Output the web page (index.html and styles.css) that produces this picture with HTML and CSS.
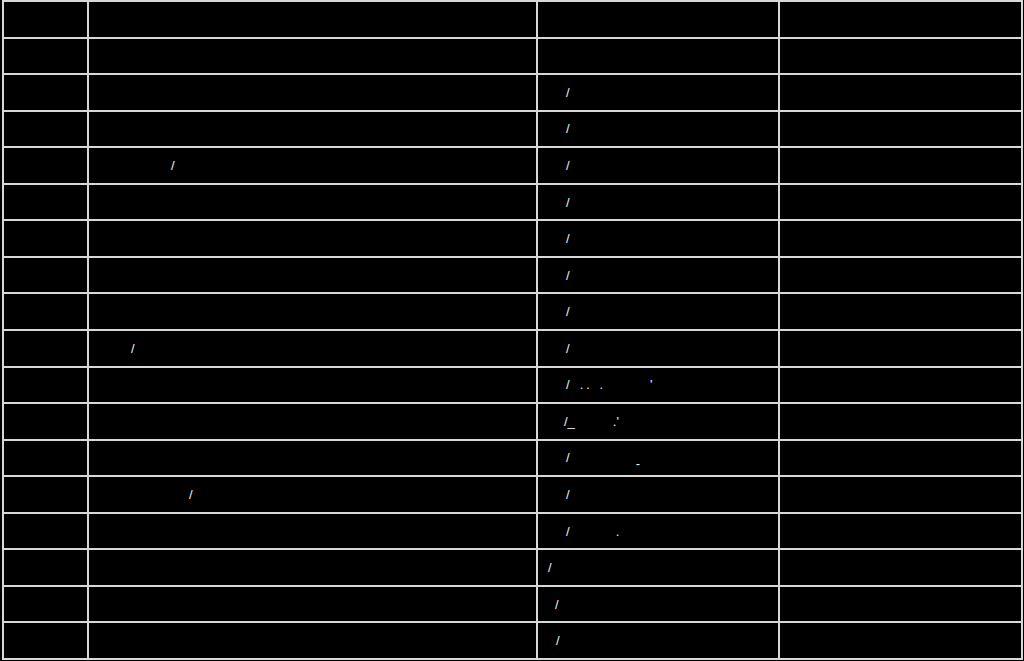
FILE: index.html
```html
<!DOCTYPE html>
<html>
<head>
<meta charset="utf-8">
<link rel="stylesheet" href="styles.css">
</head>
<body>
<div class="sheet">
  <div class="c"></div><div class="c"></div><div class="c"></div><div class="c"></div>
  <div class="c"></div><div class="c"></div><div class="c"></div><div class="c"></div>
  <div class="c"></div><div class="c"></div><div class="c"><span class="m m28">/</span></div><div class="c"></div>
  <div class="c"></div><div class="c"></div><div class="c"><span class="m m28">/</span></div><div class="c"></div>
  <div class="c"></div><div class="c"><span class="m m82">/</span></div><div class="c"><span class="m m28">/</span></div><div class="c"></div>
  <div class="c"></div><div class="c"></div><div class="c"><span class="m m28">/</span></div><div class="c"></div>
  <div class="c"></div><div class="c"></div><div class="c"><span class="m m28">/</span></div><div class="c"></div>
  <div class="c"></div><div class="c"></div><div class="c"><span class="m m28">/</span></div><div class="c"></div>
  <div class="c"></div><div class="c"></div><div class="c"><span class="m m28">/</span></div><div class="c"></div>
  <div class="c"></div><div class="c"><span class="m m42">/</span></div><div class="c"><span class="m m28">/</span></div><div class="c"></div>
  <div class="c"></div><div class="c"></div><div class="c"><span class="m m28">/</span><span class="m m10 dots">.. .</span><span class="m m44">'</span></div><div class="c"></div>
  <div class="c"></div><div class="c"></div><div class="c"><span class="m m26">/_</span><span class="m m38">.'</span></div><div class="c"></div>
  <div class="c"></div><div class="c"></div><div class="c"><span class="m m28">/</span><span class="m m66 low">-</span></div><div class="c"></div>
  <div class="c"></div><div class="c"><span class="m m100">/</span></div><div class="c"><span class="m m28">/</span></div><div class="c"></div>
  <div class="c"></div><div class="c"></div><div class="c"><span class="m m28">/</span><span class="m m46">.</span></div><div class="c"></div>
  <div class="c"></div><div class="c"></div><div class="c"><span class="m m10">/</span></div><div class="c"></div>
  <div class="c"></div><div class="c"></div><div class="c"><span class="m m17">/</span></div><div class="c"></div>
  <div class="c"></div><div class="c"></div><div class="c"><span class="m m18">/</span></div><div class="c"></div>
</div>
</body>
</html>
```
FILE: styles.css
```css
html, body {
  margin: 0;
  padding: 0;
  background: #000;
}
body {
  width: 1024px;
  height: 661px;
  overflow: hidden;
  font-family: "Liberation Sans", Arial, sans-serif;
  color: #f2f2f2;
}
.sheet {
  margin-left: 2px;
  display: grid;
  grid-template-columns: 85px 449px 242px 243px;
  grid-template-rows: repeat(18, 1fr);
  height: 658px;
  width: 1019px;
  border-top: 2px solid #d8d8d8;
  border-left: 2px solid #d8d8d8;
}
.c {
  border-right: 2px solid #d8d8d8;
  border-bottom: 2px solid #d8d8d8;
  display: flex;
  align-items: center;
  font-size: 13px;
  line-height: 1;
}
.m { display: inline-block; }
.dots { letter-spacing: 3px; }
.low { transform: translateY(6px); }
.m10 { margin-left: 10px; }
.m17 { margin-left: 17px; }
.m18 { margin-left: 18px; }
.m26 { margin-left: 26px; }
.m28 { margin-left: 28px; }
.m38 { margin-left: 38px; }
.m42 { margin-left: 42px; }
.m44 { margin-left: 44px; }
.m46 { margin-left: 46px; }
.m66 { margin-left: 66px; }
.m82 { margin-left: 82px; }
.m100 { margin-left: 100px; }
```
